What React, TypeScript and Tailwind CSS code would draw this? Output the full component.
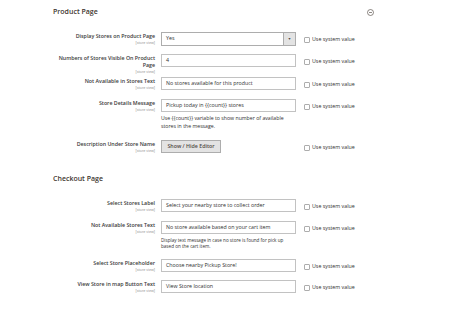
import React from 'react'

type Row = {
  label: string[]
  top: number
  kind: 'select' | 'input' | 'button'
  value?: string
  note?: string[]
  smallNote?: boolean
}

const PRODUCT_ROWS: Row[] = [
  { label: ['Display Stores on Product Page'], top: 0, kind: 'select', value: 'Yes' },
  { label: ['Numbers of Stores Visible On Product', 'Page'], top: 8, kind: 'input', value: '4' },
  { label: ['Not Available in Stores Text'], top: 3, kind: 'input', value: 'No stores available for this product' },
  {
    label: ['Store Details Message'],
    top: 9,
    kind: 'input',
    value: 'Pickup today in {{count}} stores',
    note: ['Use {{count}} variable to show number of available', 'stores in the message.'],
  },
  { label: ['Description Under Store Name'], top: 10, kind: 'button' },
]

const CHECKOUT_ROWS: Row[] = [
  { label: ['Select Stores Label'], top: 0, kind: 'input', value: 'Select your nearby store to collect order' },
  {
    label: ['Not Available Stores Text'],
    top: 9,
    kind: 'input',
    value: 'No store available based on your cart item',
    note: ['Display text message in case no store is found for pick up', 'based on the cart item.'],
    smallNote: true,
  },
  { label: ['Select Store Placeholder'], top: 10, kind: 'input', value: 'Choose nearby Pickup Store!' },
  { label: ['View Store in map Button Text'], top: 8, kind: 'input', value: 'View Store location' },
]

function Field({ row }: { row: Row }) {
  return (
    <div className="flex items-start" style={{ marginTop: row.top }}>
      {/* label column */}
      <div className="ml-[55px] w-[100px] pt-px text-right">
        {row.label.map((l) => (
          <div key={l} className="text-[5.3px] leading-[7px] font-semibold text-[#3a3a3a] whitespace-nowrap">
            {l}
          </div>
        ))}
        <div className="text-[3.6px] leading-[5px] text-[#8a8a8a]">[store view]</div>
      </div>

      {/* control column */}
      <div className="ml-[6px] w-[135px]">
        {row.kind === 'select' && (
          <div className="flex h-[14px] border border-[#adadad] bg-white">
            <div className="flex-1 flex items-center pl-[4px] text-[5.3px] text-[#303030]">{row.value}</div>
            <div className="w-[12px] flex items-center justify-center bg-[#e3e3e3] border-l border-[#adadad]">
              <span className="text-[3.5px] text-[#514943]">▼</span>
            </div>
          </div>
        )}
        {row.kind === 'input' && (
          <div className="flex items-center h-[13px] border border-[#c2c2c2] bg-white pl-[4px] text-[5.3px] text-[#303030] whitespace-nowrap overflow-hidden">
            {row.value}
          </div>
        )}
        {row.kind === 'button' && (
          <div className="flex items-center justify-center w-[60px] h-[13px] border border-[#adadad] bg-[#e3e3e3] text-[5.3px] font-semibold text-[#514943]">
            Show / Hide Editor
          </div>
        )}
        {row.note && (
          <div
            className={
              row.smallNote
                ? 'mt-[3px] text-[4.6px] leading-[6px] text-[#303030]'
                : 'mt-[2px] text-[5.2px] leading-[8px] text-[#303030]'
            }
          >
            {row.note.map((n) => (
              <div key={n} className="whitespace-nowrap">
                {n}
              </div>
            ))}
          </div>
        )}
      </div>

      {/* use system value */}
      <div className="ml-[8px] mt-[4px] flex items-center">
        <div className="w-[6px] h-[6px] border border-[#adadad] bg-white rounded-[1px]" />
        <span className="ml-[2px] text-[5.3px] text-[#303030] whitespace-nowrap">Use system value</span>
      </div>
    </div>
  )
}

export default function App() {
  return (
    <div className="w-[450px] h-[313px] bg-white overflow-hidden" style={{ fontFamily: '"Open Sans", "Liberation Sans", sans-serif' }}>
      {/* Product Page */}
      <div className="flex items-center justify-between pl-[53px] pr-[76px] pt-[8px] h-[16px]">
        <h2 className="text-[7px] leading-[8px] font-semibold text-[#41362f]">Product Page</h2>
        <svg width="7" height="7" viewBox="0 0 14 14" className="text-[#514943]">
          <circle cx="7" cy="7" r="6" fill="none" stroke="currentColor" strokeWidth="1.3" />
          <line x1="4" y1="7" x2="10" y2="7" stroke="currentColor" strokeWidth="1.3" />
        </svg>
      </div>
      <div className="mt-[16px]">
        {PRODUCT_ROWS.map((r) => (
          <Field key={r.label[0]} row={r} />
        ))}
      </div>

      {/* Checkout Page */}
      <div className="pl-[53px] mt-[22px]">
        <h2 className="text-[7px] leading-[8px] font-semibold text-[#41362f]">Checkout Page</h2>
      </div>
      <div className="mt-[16px]">
        {CHECKOUT_ROWS.map((r) => (
          <Field key={r.label[0]} row={r} />
        ))}
      </div>
    </div>
  )
}
